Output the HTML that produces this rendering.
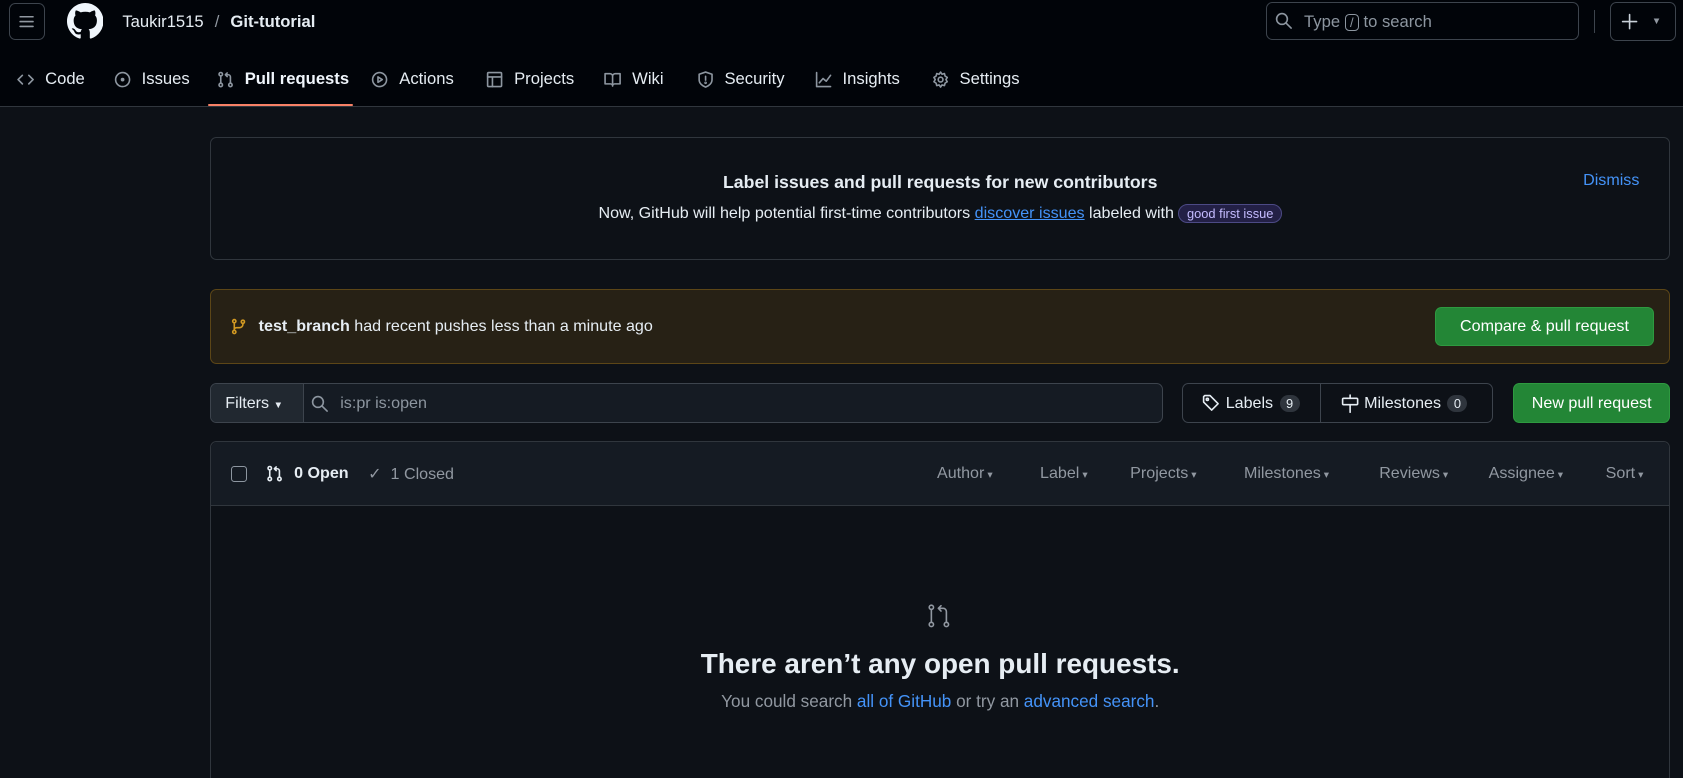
<!DOCTYPE html>
<html><head><meta charset="utf-8"><style>
*{box-sizing:border-box;margin:0;padding:0}
html,body{width:1683px;height:778px;overflow:hidden;background:#0d1117}
#z{zoom:1.0733;width:1568px;height:725px;position:relative;font-family:"Liberation Sans",sans-serif;font-size:14px;color:#e6edf3;background:#0d1117;overflow:hidden}
.a{position:absolute}
svg{fill:none;stroke:#8d96a0;stroke-width:1.5;stroke-linecap:round;stroke-linejoin:round}
.nav{position:absolute;top:64px;font-size:15.5px;color:#e6edf3;display:flex;align-items:center;height:20px}
.nav svg{width:16px;height:16px;margin-right:10px}
.box{position:absolute;border:1px solid #30363d;border-radius:6px}
.btn{position:absolute;border-radius:6px;display:flex;align-items:center;justify-content:center;font-size:14px}
.g{background:#238636;border:1px solid #2e9a40;color:#fff}
.link{color:#4493f8}
.cnt{display:inline-block;background:#2f353d;border-radius:10px;padding:1px 6px;font-size:12px;margin-left:6px}
.hf{position:absolute;top:432px;color:#9198a1;font-size:15px}
.hf:after{content:" ▾";font-size:10px}
</style></head><body><div id="z">
<div class="a" style="left:0;top:0;width:1568px;height:100px;background:#010409;border-bottom:1px solid #30363d"></div>
<div class="a" style="left:8px;top:3px;width:34px;height:34px;border:1px solid #3d444d;border-radius:6px"></div>
<svg class="a" style="left:17px;top:12px;width:16px;height:16px;stroke:#9198a1"><path d="M2 3.5h12M2 8h12M2 12.5h12"/></svg>
<svg class="a" viewBox="0 0 16 16" style="left:62px;top:3px;width:34px;height:34px;stroke:none;fill:#f0f6fc"><path d="M8 0C3.58 0 0 3.58 0 8c0 3.540 2.29 6.53 5.47 7.59.4.07.55-.17.55-.38 0-.19-.01-.82-.01-1.49-2.01.37-2.530-.49-2.69-.94-.09-.23-.48-.94-.82-1.13-.28-.15-.68-.52-.01-.53.63-.01 1.08.58 1.23.82.72 1.21 1.87.87 2.33.66.07-.52.28-.87.51-1.07-1.78-.2-3.64-.89-3.64-3.95 0-.87.31-1.59.82-2.150-.08-.2-.36-1.02.08-2.12 0 0 .67-.21 2.2.82.64-.18 1.32-.27 2-.27.68 0 1.36.09 2 .27 1.53-1.04 2.2-.82 2.2-.82.44 1.1.16 1.92.08 2.12.51.56.82 1.27.82 2.15 0 3.07-1.87 3.75-3.65 3.95.29.25.54.73.54 1.48 0 1.07-.01 1.93-.01 2.2 0 .21.15.46.55.38A8.013 8.013 0 0016 8c0-4.42-3.58-8-8-8z"/></svg>
<div class="a" style="left:114px;top:11px;font-size:15.5px">Taukir1515 <span style="color:#9198a1;margin:0 6px">/</span> <b>Git-tutorial</b></div>
<div class="a" style="left:1180px;top:2px;width:291px;height:35px;border:1px solid #3d444d;border-radius:6px"></div>
<svg class="a" style="left:1188px;top:11px;width:16px;height:16px"><circle cx="6.5" cy="6.5" r="5"/><path d="M10.5 10.5L15 15"/></svg>
<div class="a" style="left:1215px;top:11px;color:#8d96a0;font-size:15.5px">Type <span style="border:1px solid #8d96a0;border-radius:4px;padding:0 4px;font-size:12px">/</span> to search</div>
<div class="a" style="left:1485px;top:9px;width:1px;height:22px;background:#3d444d"></div>
<div class="a" style="left:1500px;top:2px;width:62px;height:36px;border:1px solid #3d444d;border-radius:6px"></div>
<svg class="a" style="left:1510px;top:12px;width:16px;height:16px;stroke:#c9d1d9"><path d="M8 1.5v13M1.5 8h13"/></svg>
<div class="a" style="left:1539px;top:15px;font-size:9px;color:#9198a1">▼</div>

<div class="nav" style="left:16px"><svg><path d="M5 4L1 8l4 4M11 4l4 4-4 4"/></svg>Code</div>
<div class="nav" style="left:106px"><svg><circle cx="8" cy="8" r="6.5"/><circle cx="8" cy="8" r="1" fill="#8d96a0"/></svg>Issues</div>
<div class="nav" style="left:202px;font-weight:bold;color:#f0f6fc"><svg><circle cx="3.5" cy="3" r="1.6"/><circle cx="3.5" cy="13" r="1.6"/><circle cx="12.5" cy="13" r="1.6"/><path d="M3.5 4.6v6.8M12.5 11.4V5.5a2 2 0 00-2-2H8M9.5 1.8L7.8 3.5l1.7 1.7"/></svg>Pull requests</div>
<div class="a" style="left:194px;top:97px;width:135px;height:2px;background:#f78166;border-radius:2px"></div>
<div class="nav" style="left:346px"><svg><circle cx="8" cy="8" r="6.5"/><path d="M6.5 5.5v5l4-2.5z"/></svg>Actions</div>
<div class="nav" style="left:453px"><svg><rect x="1.5" y="1.5" width="13" height="13" rx="1"/><path d="M1.5 5.5h13M6 5.5v9"/></svg>Projects</div>
<div class="nav" style="left:563px"><svg><path d="M1 2.5h4.5A2.5 2.5 0 018 5v9a2 2 0 00-2-2H1zM15 2.5h-4.5A2.5 2.5 0 008 5v9a2 2 0 012-2h5z"/></svg>Wiki</div>
<div class="nav" style="left:649px"><svg><path d="M8 1l6 2v5c0 3.5-3 6-6 7-3-1-6-3.5-6-7V3z"/><path d="M8 5v3.5"/><circle cx="8" cy="11" r=".5"/></svg>Security</div>
<div class="nav" style="left:759px"><svg><path d="M1.5 1.5v13h13M4 11l3.5-4 3 2.5L14.5 4"/></svg>Insights</div>
<div class="nav" style="left:868px"><svg><circle cx="8" cy="8" r="2.2"/><path d="M8 1l1.3 2 2.3-.6.6 2.3 2 1.3-1.2 2 1.2 2-2 1.3-.6 2.3-2.3-.6L8 15l-1.3-2-2.3.6-.6-2.3-2-1.3 1.2-2-1.2-2 2-1.3.6-2.3 2.3.6z"/></svg>Settings</div>

<div class="box" style="left:196px;top:128px;width:1360px;height:114px"></div>
<div class="a" style="left:196px;width:1360px;top:160px;text-align:center;font-weight:bold;font-size:16.5px">Label issues and pull requests for new contributors</div>
<div class="a" style="left:196px;width:1360px;top:190px;text-align:center;font-size:15px">Now, GitHub will help potential first-time contributors <span class="link" style="text-decoration:underline">discover issues</span> labeled with <span style="display:inline-block;border:1px solid #4c4a85;background:#232046;color:#c4bbff;border-radius:10px;padding:1px 7px;font-size:12px">good first issue</span></div>
<div class="a link" style="left:1475px;top:159px;font-size:15px">Dismiss</div>

<div class="box" style="left:196px;top:269px;width:1360px;height:70px;background:#272115;border-color:#5c4617"></div>
<svg class="a" style="left:214px;top:296px;width:16px;height:16px;stroke:#d29922"><circle cx="4" cy="3" r="1.5"/><circle cx="4" cy="13" r="1.5"/><circle cx="12" cy="3.5" r="1.5"/><path d="M4 4.5v7M12 5v1a3 3 0 01-3 3H6a2 2 0 00-2 2"/></svg>
<div class="a" style="left:241px;top:295px;font-size:15px"><b>test_branch</b> had recent pushes less than a minute ago</div>
<div class="btn g" style="left:1337px;top:286px;width:204px;height:36px;font-size:15px">Compare &amp; pull request</div>

<div class="a" style="left:196px;top:357px;width:888px;height:37px;border:1px solid #3d444d;border-radius:6px;background:#151b23;overflow:hidden">
<div style="position:absolute;left:0;top:0;width:86px;height:35px;background:#212830;border-right:1px solid #3d444d;padding:9px 0 0 13px;font-size:15px">Filters <span style="font-size:9px">▼</span></div></div>
<svg class="a" style="left:290px;top:368px;width:16px;height:16px"><circle cx="6.5" cy="6.5" r="5"/><path d="M10.5 10.5L15 15"/></svg>
<div class="a" style="left:317px;top:367px;color:#8d96a0;font-size:15px">is:pr is:open</div>
<div class="a" style="left:1101px;top:357px;width:290px;height:37px;border:1px solid #3d444d;border-radius:6px"></div>
<div class="a" style="left:1230px;top:357px;width:1px;height:37px;background:#3d444d"></div>
<svg class="a" style="left:1120px;top:367px;width:18px;height:18px;stroke:#e6edf3"><path d="M1.5 2.5v5l7.5 7.5 6-6-7.5-7.5h-5z"/><circle cx="5" cy="5" r="1"/></svg>
<div class="a" style="left:1142px;top:367px;font-size:15px">Labels<span class="cnt">9</span></div>
<svg class="a" style="left:1249px;top:367px;width:18px;height:18px;stroke:#e6edf3"><rect x="1.5" y="4" width="14" height="6" rx="1"/><path d="M8.5 1v3M8.5 10v7"/></svg>
<div class="a" style="left:1271px;top:367px;font-size:15px">Milestones<span class="cnt">0</span></div>
<div class="btn g" style="left:1410px;top:357px;width:146px;height:37px;font-size:15px">New pull request</div>

<div class="box" style="left:196px;top:411px;width:1360px;height:340px"></div>
<div class="a" style="left:197px;top:412px;width:1358px;height:59px;background:#151b23;border-bottom:1px solid #30363d;border-radius:6px 6px 0 0"></div>
<div class="a" style="left:215px;top:434px;width:15px;height:15px;border:1.5px solid #8d96a0;border-radius:3px"></div>
<svg class="a" style="left:248px;top:433px;width:16px;height:16px;stroke:#e6edf3"><circle cx="3.5" cy="3" r="1.6"/><circle cx="3.5" cy="13" r="1.6"/><circle cx="12.5" cy="13" r="1.6"/><path d="M3.5 4.6v6.8M12.5 11.4V5.5a2 2 0 00-2-2H8M9.5 1.8L7.8 3.5l1.7 1.7"/></svg>
<div class="a" style="left:274px;top:432px;font-weight:bold;font-size:15px">0 Open</div>
<div class="a" style="left:343px;top:432px;color:#9198a1;font-size:15px">✓&nbsp; 1 Closed</div>
<div class="hf" style="left:873px">Author</div>
<div class="hf" style="left:969px">Label</div>
<div class="hf" style="left:1053px">Projects</div>
<div class="hf" style="left:1159px">Milestones</div>
<div class="hf" style="left:1285px">Reviews</div>
<div class="hf" style="left:1387px">Assignee</div>
<div class="hf" style="left:1496px">Sort</div>

<svg class="a" style="left:863px;top:562px;width:24px;height:24px;stroke:#9198a1"><circle cx="5" cy="4" r="2"/><circle cx="5" cy="20" r="2"/><circle cx="19" cy="20" r="2"/><path d="M5 6v12M19 18V8a3 3 0 00-3-3h-4M14 2.5L11.5 5 14 7.5"/></svg>
<div class="a" style="left:196px;width:1360px;top:604px;text-align:center;font-weight:bold;font-size:26px">There aren’t any open pull requests.</div>
<div class="a" style="left:196px;width:1360px;top:644px;text-align:center;font-size:16px;color:#9198a1">You could search <span class="link">all of GitHub</span> or try an <span class="link">advanced search</span>.</div>
</div></body></html>
